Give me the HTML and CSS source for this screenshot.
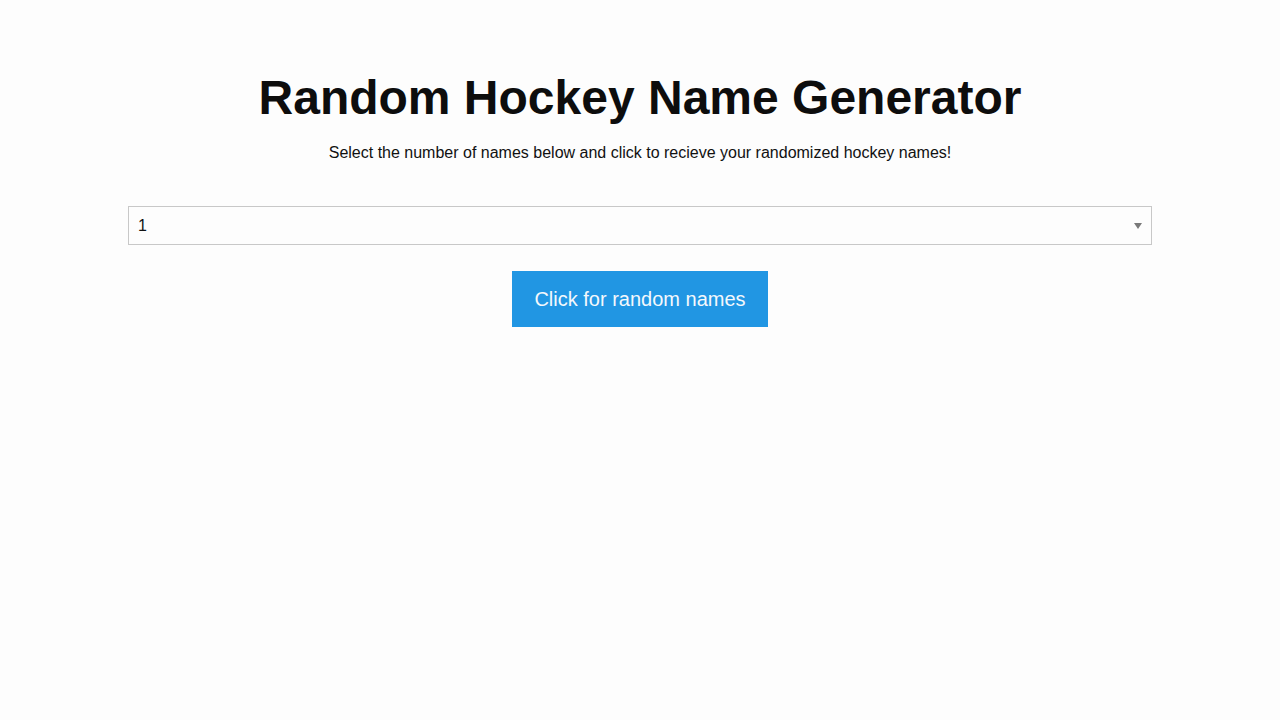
FILE: index.html
```html
<!DOCTYPE html>
<html lang="en">
<head>
<meta charset="utf-8">
<title>Random Hockey Name Generator</title>
<link rel="stylesheet" href="styles.css">
</head>
<body>
<main class="page">
  <h1 class="title">Random Hockey Name Generator</h1>
  <p class="subtitle">Select the number of names below and click to recieve your randomized hockey names!</p>
  <div class="select-wrap">
    <select class="count-select">
      <option>1</option>
      <option>2</option>
      <option>3</option>
      <option>4</option>
      <option>5</option>
    </select>
    <span class="select-arrow"></span>
  </div>
  <div class="actions">
    <button class="generate-btn" type="button">Click for random names</button>
  </div>
</main>
</body>
</html>
```
FILE: styles.css
```css
html, body {
  margin: 0;
  padding: 0;
  background: #fdfdfd;
  font-family: "Liberation Sans", Arial, sans-serif;
  color: #111;
}

.page {
  width: 1024px;
  margin: 0 auto;
  padding-top: 68px;
  display: flex;
  flex-direction: column;
  align-items: stretch;
}

.title {
  margin: 0;
  text-align: center;
  font-size: 48px;
  line-height: 60px;
  font-weight: 700;
  color: #0d0d0d;
}

.subtitle {
  margin: 15px 0 0;
  text-align: center;
  font-size: 16px;
  line-height: 20px;
  color: #111;
}

.select-wrap {
  position: relative;
  margin-top: 43px;
}

.count-select {
  display: block;
  width: 100%;
  height: 39px;
  margin: 0;
  padding: 0 9px;
  border: 1px solid #c8c8c8;
  border-radius: 0;
  background: #fdfdfd;
  font-family: "Liberation Sans", Arial, sans-serif;
  font-size: 16px;
  color: #111;
  appearance: none;
  -webkit-appearance: none;
  outline: none;
}

.select-arrow {
  position: absolute;
  right: 10px;
  top: 17px;
  width: 0;
  height: 0;
  border-left: 4px solid transparent;
  border-right: 4px solid transparent;
  border-top: 6px solid #7a7a7a;
  pointer-events: none;
}

.actions {
  display: flex;
  justify-content: center;
  margin-top: 26px;
}

.generate-btn {
  width: 256px;
  height: 56px;
  border: none;
  border-radius: 0;
  background: #2196e3;
  color: #f4f8fc;
  font-family: "Liberation Sans", Arial, sans-serif;
  font-size: 20px;
  cursor: pointer;
}
```
